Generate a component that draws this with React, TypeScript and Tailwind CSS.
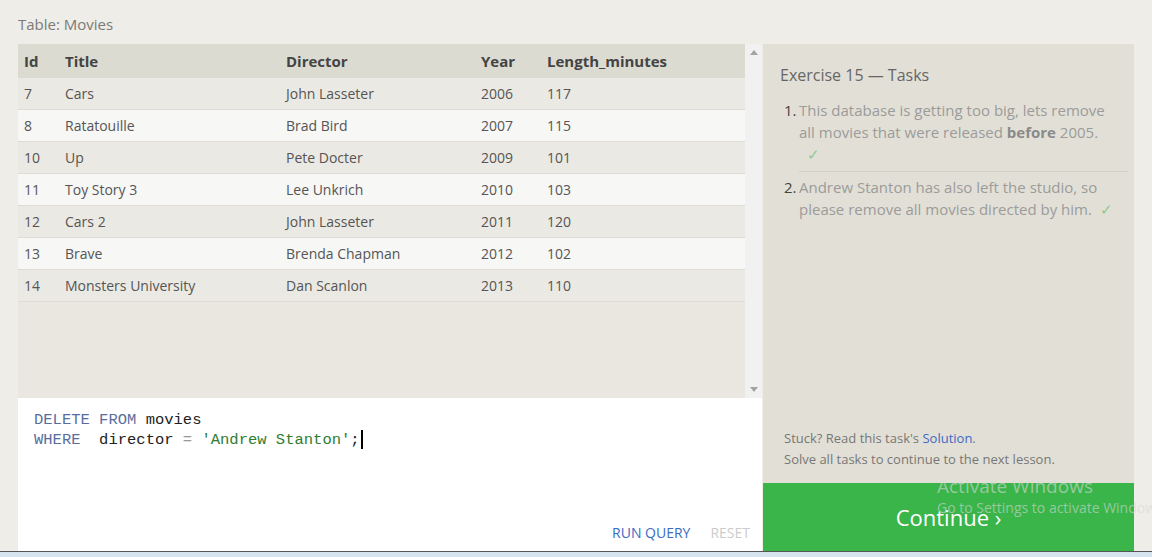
import React from "react";

const movies = [
  { id: 7, title: "Cars", director: "John Lasseter", year: 2006, length: 117 },
  { id: 8, title: "Ratatouille", director: "Brad Bird", year: 2007, length: 115 },
  { id: 10, title: "Up", director: "Pete Docter", year: 2009, length: 101 },
  { id: 11, title: "Toy Story 3", director: "Lee Unkrich", year: 2010, length: 103 },
  { id: 12, title: "Cars 2", director: "John Lasseter", year: 2011, length: 120 },
  { id: 13, title: "Brave", director: "Brenda Chapman", year: 2012, length: 102 },
  { id: 14, title: "Monsters University", director: "Dan Scanlon", year: 2013, length: 110 },
];

const cols = "grid grid-cols-[41px_221px_195px_66px_1fr] pl-[6px] items-center";

const Check = () => <span className="text-[#8fc98f] ml-[8px]">✓</span>;

const App = () => {
  return (
    <div className="relative w-[1152px] h-[557px] overflow-hidden bg-[#efede7] font-['Open_Sans',sans-serif] flex flex-col">
      <div className="h-[44px] pl-[18px] pt-[4px] flex items-center text-[15px] text-[#7a7a7a]">
        Table: Movies
      </div>

      <div className="flex pl-[18px] h-[507px]">
        {/* left: table + editor */}
        <div className="w-[744px] flex flex-col">
          <div className="h-[354px] flex">
            <div className="flex-1 bg-[#e9e7e0] flex flex-col">
              <div className={`${cols} h-[34px] bg-[#dcdbd1] text-[15px] font-bold text-[#444]`}>
                <span>Id</span>
                <span>Title</span>
                <span>Director</span>
                <span>Year</span>
                <span>Length_minutes</span>
              </div>
              {movies.map((m, i) => (
                <div
                  key={m.id}
                  className={`${cols} h-[32px] text-[14px] text-[#555] border-b border-[#dedcd5] ${
                    i % 2 === 0 ? "bg-[#ebe9e3]" : "bg-[#f7f7f5]"
                  }`}
                >
                  <span>{m.id}</span>
                  <span>{m.title}</span>
                  <span>{m.director}</span>
                  <span>{m.year}</span>
                  <span>{m.length}</span>
                </div>
              ))}
            </div>
            {/* scrollbar */}
            <div className="w-[17px] bg-[#f1f1f1] flex flex-col items-center justify-between py-[6px]">
              <svg width="8" height="5" viewBox="0 0 8 5">
                <path d="M0 5 L4 0 L8 5 Z" fill="#a3a3a3" />
              </svg>
              <svg width="8" height="5" viewBox="0 0 8 5">
                <path d="M0 0 L4 5 L8 0 Z" fill="#a3a3a3" />
              </svg>
            </div>
          </div>

          <div className="flex-1 bg-white flex flex-col">
            <div className="pl-[16px] pt-[12px] font-['Liberation_Mono',monospace] text-[15.5px] leading-[20px] whitespace-pre">
              <div>
                <span className="text-[#5a6e9e]">DELETE FROM</span>
                <span className="text-[#222]"> movies</span>
              </div>
              <div>
                <span className="text-[#5a6e9e]">WHERE</span>
                <span className="text-[#222]">  director </span>
                <span className="text-[#999]">=</span>
                <span className="text-[#2f7d32]"> 'Andrew Stanton'</span>
                <span className="text-[#222]">;</span>
                <span className="inline-block w-[2px] h-[19px] bg-black align-middle ml-[1px]" />
              </div>
            </div>
            <div className="mt-auto flex justify-end gap-[20px] pr-[12px] pb-[8px] text-[14px]">
              <span className="text-[#3b6bc4]">RUN QUERY</span>
              <span className="text-[#cccccc]">RESET</span>
            </div>
          </div>
        </div>

        {/* right: tasks */}
        <div className="w-[371px] ml-[1px] flex flex-col">
          <div className="flex-1 bg-[#e2e0d6] pl-[17px] pr-[6px] pt-[20px] pb-[13px] flex flex-col">
            <div className="text-[16px] text-[#666] leading-[22px]">Exercise 15 — Tasks</div>
            <ol className="mt-[13px] text-[15px] leading-[22px] text-[#9b9b9b]">
              <li className="flex pl-[4px] pb-[6px]">
                <span className="w-[15px] shrink-0 text-[#444]">1.</span>
                <span className="w-[318px]">
                  This database is getting too big, lets remove all movies that were released{" "}
                  <b className="text-[#8a8a8a]">before</b> 2005.
                  <br />
                  <Check />
                </span>
              </li>
              <li className="ml-[19px] border-t border-[#d3d1c7] pt-[4px] flex">
                <span className="w-[15px] shrink-0 text-[#444] -ml-[15px]">2.</span>
                <span className="w-[318px]">
                  Andrew Stanton has also left the studio, so please remove all movies directed by him.
                  <Check />
                </span>
              </li>
            </ol>
            <div className="mt-auto pl-[4px] text-[13px] leading-[21px] text-[#777]">
              <div>
                Stuck? Read this task's <span className="text-[#3b6bc4]">Solution</span>.
              </div>
              <div>Solve all tasks to continue to the next lesson.</div>
            </div>
          </div>
          <div className="h-[68px] bg-[#39b54a] flex items-center justify-center text-white text-[22px]">
            Continue ›
          </div>
        </div>
      </div>

      <div className="h-[6px] border-t border-[#555] bg-[#d6e4f0]" />

      {/* OS watermark overlay */}
      <div className="absolute left-[937px] top-[474px] pointer-events-none whitespace-nowrap text-[#d8d8d8]/60">
        <div className="text-[19px] leading-[24px]">Activate Windows</div>
        <div className="text-[14px] leading-[20px]">Go to Settings to activate Windows.</div>
      </div>
    </div>
  );
};

export default App;
